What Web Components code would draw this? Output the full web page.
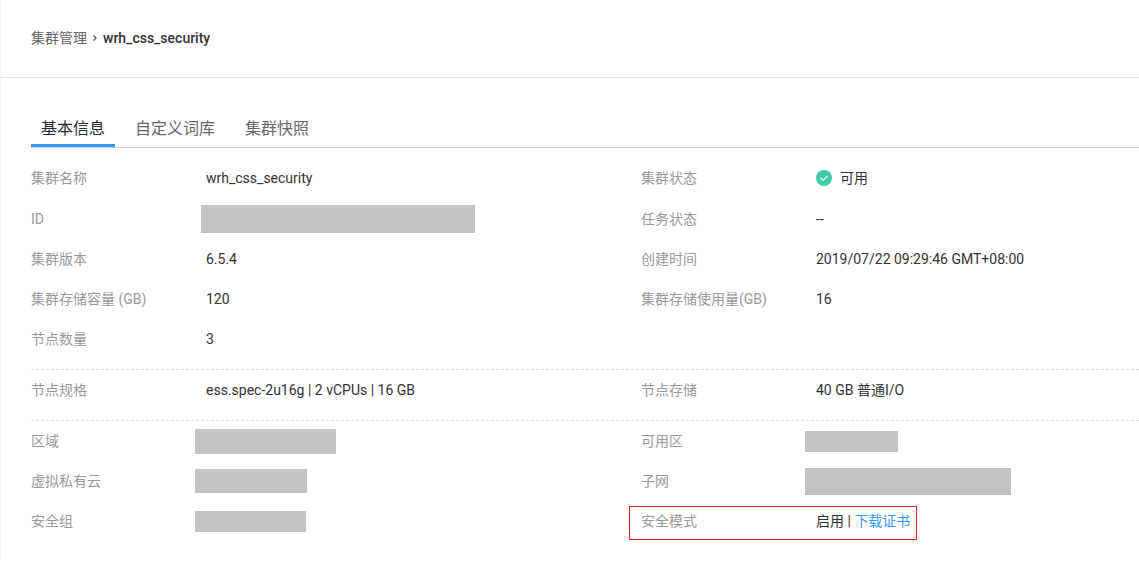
<!DOCTYPE html>
<html lang="zh-CN">
<head>
<meta charset="utf-8">
<title>wrh_css_security</title>
<style>
body { margin: 0; background: #fff; color: #333; font: 14px/20px Roboto, "Noto Sans CJK SC", sans-serif; }
</style>
</head>
<body>
<cluster-page></cluster-page>
<script>
const define = (name, html, setup) => customElements.define(name, class extends HTMLElement {
  constructor() {
    super();
    const t = document.createElement('template');
    t.innerHTML = html;
    this.attachShadow({ mode: 'open' }).append(t.content.cloneNode(true));
  }
  connectedCallback() { if (setup) setup(this, this.shadowRoot); }
});

define('crumb-bar', `
<style>
:host { display: block; border-bottom: 1px solid #dfe1e6; }
nav { display: flex; align-items: center; gap: 5px; padding: 28px 30px 29px; }
a { color: #666; text-decoration: none; }
svg { width: 6px; height: 8px; }
strong { font-weight: 500; color: #333; }
</style>
<nav aria-label="breadcrumb"><a href="#list"><slot name="parent"></slot></a>
<svg viewBox="0 0 6 8" fill="none" stroke="#555" stroke-width="1.2"><path d="M1.5 1.5 4 4 1.5 6.5"/></svg>
<strong><slot></slot></strong></nav>`);

define('tab-item', `
<style>
:host { display: block; }
button { display: block; margin: 0; padding: 7px 10px 3px; border: 0; border-bottom: 3px solid transparent; background: none; color: #666; font: inherit; font-size: 16px; line-height: 24px; cursor: pointer; }
:host([selected]) button { color: #252b3a; border-bottom-color: #3399ff; }
</style>
<button type="button" role="tab"><slot></slot></button>`,
(host, root) => root.querySelector('button').setAttribute('aria-selected', host.hasAttribute('selected')));

define('tab-bar', `
<style>
:host { display: flex; gap: 10px; margin: 32px 0 0 30px; border-bottom: 1px solid #ccc; }
</style><slot></slot>`);

define('info-section', `
<style>
:host { display: grid; grid-template-columns: 610fr 498fr; margin-left: 30px; padding-bottom: 10px; border-bottom: 1px dashed #dfe1e6; }
:host([first]) { padding-top: 10px; }
:host([last]) { border-bottom: 0; }
</style><slot></slot>`);

define('info-item', `
<style>
:host { display: block; min-width: 0; }
dl { position: relative; display: flex; align-items: center; width: fit-content; min-height: 40px; margin: 0; }
:host([tall]) dl { padding-bottom: 1px; }
dt { flex: none; width: 175px; color: #999; }
dd { margin: 0; white-space: nowrap; }
:host([marked]) dl::after { content: ""; position: absolute; inset: 5px -7px 1px -12px; border: 1px solid #ed1c24; pointer-events: none; }
</style>
<dl><dt></dt><dd><slot></slot></dd></dl>`,
(host, root) => { root.querySelector('dt').textContent = host.getAttribute('label'); });

define('redacted-bar', `
<style>
:host { display: block; margin-left: -11px; background: #c3c3c3; width: var(--w); height: var(--h); }
:host([inner]) { margin-left: -5px; }
</style>`);

define('status-ok', `
<style>
:host { display: flex; align-items: center; gap: 8px; }
svg { width: 16px; height: 16px; }
</style>
<svg viewBox="0 0 16 16"><circle cx="8" cy="8" r="8" fill="#3dcca6"/><path d="M4.3 7.7 7.1 10.4 11.7 5.9" fill="none" stroke="#fff" stroke-width="1.2"/></svg>
<slot></slot>`);

define('text-link', `
<style>
:host { display: inline; }
a { color: #3399ff; text-decoration: none; }
</style>
<a href="#certificate"><slot></slot></a>`);

define('cluster-page', `
<style>
:host { display: block; }
main { border-left: 1px solid #f5f5f6; padding-bottom: 9px; }
</style>
<main>
<crumb-bar><span slot="parent">集群管理</span>wrh_css_security</crumb-bar>
<tab-bar role="tablist"><tab-item selected>基本信息</tab-item><tab-item>自定义词库</tab-item><tab-item>集群快照</tab-item></tab-bar>
<info-section first>
<info-item tall label="集群名称">wrh_css_security</info-item>
<info-item tall label="集群状态"><status-ok>可用</status-ok></info-item>
<info-item label="ID"><redacted-bar inner style="--w:274px;--h:28px"></redacted-bar></info-item>
<info-item label="任务状态">--</info-item>
<info-item label="集群版本">6.5.4</info-item>
<info-item label="创建时间">2019/07/22 09:29:46 GMT+08:00</info-item>
<info-item label="集群存储容量 (GB)">120</info-item>
<info-item label="集群存储使用量(GB)">16</info-item>
<info-item label="节点数量">3</info-item>
</info-section>
<info-section>
<info-item label="节点规格">ess.spec-2u16g | 2 vCPUs | 16 GB</info-item>
<info-item label="节点存储">40 GB 普通I/O</info-item>
</info-section>
<info-section last>
<info-item label="区域"><redacted-bar style="--w:141px;--h:25px"></redacted-bar></info-item>
<info-item label="可用区"><redacted-bar style="--w:93px;--h:21px"></redacted-bar></info-item>
<info-item label="虚拟私有云"><redacted-bar style="--w:112px;--h:24px"></redacted-bar></info-item>
<info-item label="子网"><redacted-bar style="--w:206px;--h:27px"></redacted-bar></info-item>
<info-item label="安全组"><redacted-bar style="--w:111px;--h:21px"></redacted-bar></info-item>
<info-item marked label="安全模式">启用 | <text-link>下载证书</text-link></info-item>
</info-section>
</main>`);
</script>
</body>
</html>
